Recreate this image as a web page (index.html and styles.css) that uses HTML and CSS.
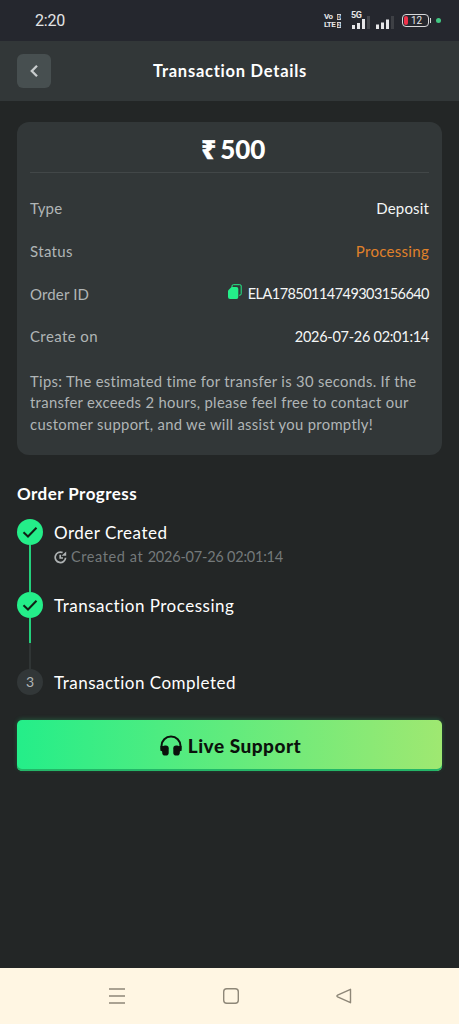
FILE: index.html
```html
<!DOCTYPE html>
<html lang="en">
<head>
<meta charset="utf-8">
<title>Transaction Details</title>
<link rel="stylesheet" href="styles.css">
</head>
<body>
<div class="screen">
  <div class="statusbar">
    <span class="clock">2:20</span>
    <div class="status-icons">
      <div class="volte"><span>Vo<b>D</b></span><span>LTE<b>2</b></span></div>
      <div class="signal">
        <span class="net">5G</span>
        <svg width="24" height="18" viewBox="0 0 24 18"><g fill="#e6e6e8"><rect x="4" y="12" width="3" height="4"/><rect x="9" y="10" width="3" height="6"/><rect x="14" y="6" width="3" height="10"/></g><rect x="19" y="3" width="3" height="13" fill="#45474c"/></svg>
      </div>
      <svg class="signal-two" width="20" height="18" viewBox="0 0 20 18"><g fill="#e6e6e8"><rect x="0" y="11.500" width="3" height="4.500"/><rect x="5" y="9.500" width="3" height="6.500"/><rect x="10" y="6.500" width="3" height="9.500"/></g><rect x="15" y="3" width="3" height="13" fill="#3e4045"/></svg>
      <div class="battery"><i></i><span>12</span></div>
      <span class="live-dot"></span>
    </div>
  </div>

  <header class="header">
    <button class="back" aria-label="Back"><svg width="12" height="14" viewBox="0 0 12 14"><path d="M9 1.800L3.800 7l5.200 5.200" fill="none" stroke="#c9cdce" stroke-width="2.300"/></svg></button>
    <h1>Transaction Details</h1>
  </header>

  <main class="content">
    <section class="card">
      <div class="amount"><span class="rupee">₹</span><span>500</span></div>
      <div class="row"><span class="label">Type</span><span class="value">Deposit</span></div>
      <div class="row"><span class="label status">Status</span><span class="value pending">Processing</span></div>
      <div class="row"><span class="label">Order ID</span>
        <span class="value order-id"><svg width="14" height="16" viewBox="0 0 14 16"><path d="M4 3V2Q4 .7 5.300 .7H11.800Q13.200 .7 13.200 2V9.800Q13.200 11.200 11.800 11.200H11" fill="none" stroke="#24ee89" stroke-width="1"/><path d="M3.500 3H8.500Q10.300 3 10.300 5V13Q10.300 15 8.500 15H2Q0 15 0 13V6.500Z" fill="#24ee89"/></svg><span>ELA17850114749303156640</span></span></div>
      <div class="row"><span class="label create">Create on</span><span class="value date">2026-07-26 02:01:14</span></div>
      <p class="tips"><span>Tips: The estimated time for transfer is 30 seconds. If the</span><span>transfer exceeds 2 hours, please feel free to contact our</span><span>customer support, and we will assist you promptly!</span></p>
    </section>

    <h2>Order Progress</h2>
    <div class="steps">
      <div class="step created">
        <div class="rail"><span class="dot done"><svg width="26" height="26" viewBox="0 0 26 26"><path d="M6.500 13.200L11 17.500 19.500 8.800" fill="none" stroke="#102015" stroke-width="2"/></svg></span><i class="line"></i></div>
        <div class="step-text"><span class="name">Order Created</span>
          <span class="time"><svg width="13" height="13" viewBox="0 0 13 13" fill="none" stroke="#aeb2b3" stroke-width="1.700"><path d="M8.600 1.600A5.200 5.200 0 1 0 11.600 6.700M6.200 3.700V7H9"/><path d="M7.600 4.700H12.200V.6Z" fill="#aeb2b3" stroke="none"/></svg><span>Created at <span class="stamp">2026-07-26 02:01:14</span></span></span></div>
      </div>
      <div class="step processing">
        <div class="rail"><span class="dot done"><svg width="26" height="26" viewBox="0 0 26 26"><path d="M6.500 13.200L11 17.500 19.500 8.800" fill="none" stroke="#102015" stroke-width="2"/></svg></span><i class="line half"></i></div>
        <div class="step-text"><span class="name">Transaction Processing</span></div>
      </div>
      <div class="step">
        <div class="rail"><span class="dot">3</span></div>
        <div class="step-text"><span class="name">Transaction Completed</span></div>
      </div>
    </div>

    <button class="support"><svg width="22" height="22" viewBox="0 0 22 22"><path d="M1.500 16V11a9.500 9.500 0 0 1 19 0V16" fill="none" stroke="#0b120c" stroke-width="2"/><rect x="2.200" y="10.500" width="6.500" height="10" rx="2.800" fill="#0b120c"/><rect x="13.300" y="10.500" width="6.500" height="10" rx="2.800" fill="#0b120c"/><path d="M.5 11H3V17Q.5 16 .5 14ZM21.500 11H19V17Q21.500 16 21.500 14Z" fill="#0b120c"/></svg><span>Live Support</span></button>
  </main>

  <nav class="navbar">
    <svg width="18" height="18" viewBox="0 0 18 18"><path d="M1 2H17M1 9H17M1 16H17"/></svg>
    <svg width="18" height="18" viewBox="0 0 18 18"><rect x="1.700" y="1.700" width="14.600" height="14.600" rx="3"/></svg>
    <svg width="18" height="18" viewBox="0 0 18 18"><path d="M15.500 2.300V15.700L2.600 9.800Q1.200 9 2.600 8.200Z" stroke-linejoin="round"/></svg>
  </nav>
</div>
</body>
</html>
```
FILE: styles.css
```css
* { box-sizing: border-box; }
body { margin: 0; background: #232626; font-family: Lato, "Noto Sans", sans-serif; font-variant-ligatures: none; color: #fff; }
button { border: 0; padding: 0; font-family: inherit; }
svg { display: block; flex: none; }
.screen { width: 459px; height: 1024px; display: flex; flex-direction: column; white-space: nowrap; }

.statusbar { height: 41px; flex: none; background: #25272e; display: flex; align-items: center; justify-content: space-between; padding: 0 18px 0 35px; }
.clock { font: 16px/20px Roboto, sans-serif; color: #e4e4e6; letter-spacing: -0.2px; }
.status-icons { display: flex; align-items: center; }
.volte { width: 17px; display: flex; flex-direction: column; font: bold 8px/8px Roboto, sans-serif; color: #e6e6e8; letter-spacing: -0.6px; }
.volte span { display: flex; justify-content: space-between; align-items: center; }
.volte b { width: 4px; background: #d5d5d8; color: #25272e; font-size: 5px; line-height: 6px; height: 6px; letter-spacing: 0; text-align: center; }
.signal { position: relative; margin-left: 7px; }
.net { position: absolute; left: 3px; top: 1px; font: bold 9px/9px Roboto, sans-serif; color: #e6e6e8; letter-spacing: -0.5px; }
.signal svg, .signal-two { margin-top: 3px; }
.signal-two { margin-left: 4px; }
.battery { position: relative; width: 27px; height: 13px; margin-left: 6px; border: 1.500px solid #d8d8da; border-radius: 4px; display: flex; align-items: center; padding: 1px; }
.battery::after { content: ""; position: absolute; right: -3px; top: 3px; width: 1px; height: 5px; background: #d8d8da; }
.battery i { width: 4px; height: 9px; border-radius: 2px; background: #f0324a; }
.battery span { font: 10px/10px Roboto, sans-serif; color: #e6e6e8; margin-left: 3px; }
.live-dot { width: 5px; height: 5px; border-radius: 50%; background: #42c883; margin-left: 7px; }

.header { height: 60px; flex: none; background: #323738; display: flex; align-items: center; padding: 0 17px; }
.back { width: 34px; height: 34px; border-radius: 6px; background: #474f50; display: flex; align-items: center; justify-content: center; }
h1 { flex: 1; margin: 0 33px 0 0; text-align: center; font-size: 16.500px; line-height: 22px; font-weight: 700; letter-spacing: 0.750px; }

.content { flex: 1; padding: 21px 17px 0; display: flex; flex-direction: column; }
.card { height: 333px; background: #323738; border-radius: 12px; padding: 0 13px; }
.amount { height: 51px; margin-bottom: 14px; border-bottom: 1px solid #424748; display: flex; align-items: center; justify-content: center; gap: 4px; padding-top: 4px; padding-left: 8px; font-size: 26px; font-weight: 900; }
.rupee { font: 900 25px/30px "Noto Sans", sans-serif; -webkit-text-stroke: 0.500px #fff; }
.row { height: 42.700px; display: flex; align-items: center; justify-content: space-between; font-size: 15px; line-height: 20px; }
.label { color: #b0b5b6; letter-spacing: 0.150px; }
.status { letter-spacing: 0.350px; }
.create { letter-spacing: 0.400px; }
.value { color: #f4f6f6; letter-spacing: 0.150px; }
.pending { color: #e0812a; letter-spacing: 0.300px; }
.order-id { display: flex; align-items: center; gap: 6px; font-size: 14.500px; letter-spacing: -0.550px; }
.order-id svg { margin-top: -3px; }
.date { font-size: 14.500px; letter-spacing: -0.280px; padding-top: 1px; }
.tips { margin: 13px 0 0; display: flex; flex-direction: column; font-size: 14.800px; line-height: 21.500px; letter-spacing: 0.320px; color: #b0b5b6; }

h2 { margin: 28px 0 0; font-size: 17px; line-height: 22px; font-weight: 700; letter-spacing: 0.450px; }
.steps { margin-top: 14px; display: flex; flex-direction: column; }
.step { display: flex; gap: 11px; }
.created { height: 72.500px; }
.processing { height: 77px; }
.rail { width: 26px; display: flex; flex-direction: column; align-items: center; }
.dot { width: 26px; height: 26px; flex: none; border-radius: 50%; background: #323738; color: #b0b5b6; font-size: 14px; line-height: 26px; text-align: center; }
.done { background: #24ee89; }
.line { width: 2px; flex: 1; background: #24d07c; }
.half { background: linear-gradient(#24d07c 25px, #303535 25px); }
.step-text { display: flex; flex-direction: column; padding-top: 1px; }
.name { font-size: 17px; line-height: 26px; letter-spacing: 0.500px; }
.time { display: flex; align-items: center; gap: 4px; font-size: 14.500px; line-height: 22px; letter-spacing: 0.600px; color: #74797a; }
.stamp { letter-spacing: -0.220px; }

.support { margin-top: 24.500px; height: 51px; border-radius: 5px; background: linear-gradient(90deg, #24ee89, #9fe871); box-shadow: inset 0 -2px #24b668, 0 -1px 4px #24b66855; display: flex; align-items: center; justify-content: center; gap: 6px; padding-left: 2px; font-size: 19px; font-weight: 900; letter-spacing: 0.500px; color: #0b120c; }

.navbar { height: 56px; flex: none; background: #fff6e3; display: flex; justify-content: space-between; align-items: center; padding: 0 106px 0 108px; }
.navbar svg { fill: none; stroke: #8e8778; stroke-width: 1.400; }
```
